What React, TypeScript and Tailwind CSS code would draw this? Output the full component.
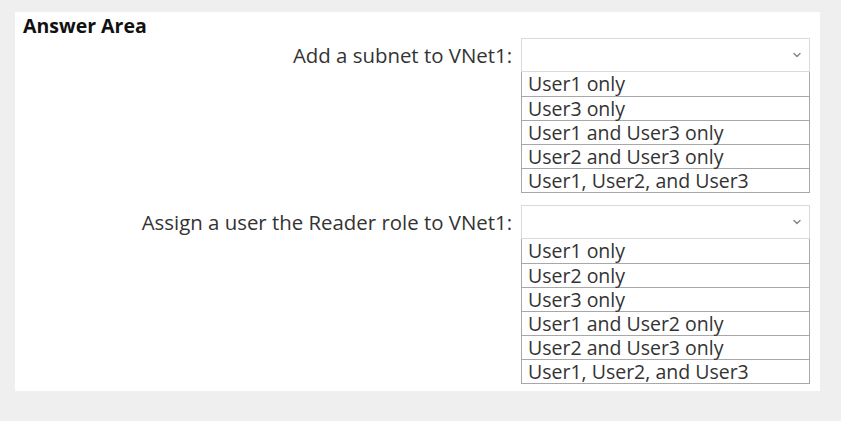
import { ChevronDown } from "lucide-react";

const sections = [
  {
    label: "Add a subnet to VNet1:",
    options: ["User1 only", "User3 only", "User1 and User3 only", "User2 and User3 only", "User1, User2, and User3"],
  },
  {
    label: "Assign a user the Reader role to VNet1:",
    options: [
      "User1 only",
      "User2 only",
      "User3 only",
      "User1 and User2 only",
      "User2 and User3 only",
      "User1, User2, and User3",
    ],
  },
];

export default function App() {
  return (
    <div className="w-[841px] h-[421px] bg-[#efefef] pt-[12px] pl-[15px]" style={{ fontFamily: '"Open Sans", "Noto Sans", sans-serif' }}>
      <div className="w-[805px] h-[379px] bg-white pl-[8px] pr-[10px] pt-[1px]">
        <h1 className="text-[19.5px] font-bold text-[#111] leading-[25px]">Answer Area</h1>
        <div className="flex flex-col gap-[12px]">
          {sections.map((s) => (
            <div key={s.label} className="flex justify-end">
              <div className="flex flex-col">
                <div className="flex items-center justify-end">
                  <span className="text-[20.4px] text-[#333] mr-[9px]">{s.label}</span>
                  <div className="w-[289px] h-[34px] border border-[#dadada] bg-white flex items-center justify-end pr-[6px]">
                    <ChevronDown className="w-[12px] h-[12px] text-[#888]" strokeWidth={3} />
                  </div>
                </div>
                <div className="self-end w-[289px] border border-[#a8a8a8] border-t-0">
                  {s.options.map((o, j) => (
                    <div
                      key={o}
                      className={`h-[24px] px-[6px] text-[19.5px] leading-[23px] text-[#333] ${j > 0 ? "border-t border-[#a8a8a8]" : ""}`}
                    >
                      {o}
                    </div>
                  ))}
                </div>
              </div>
            </div>
          ))}
        </div>
      </div>
    </div>
  );
}
